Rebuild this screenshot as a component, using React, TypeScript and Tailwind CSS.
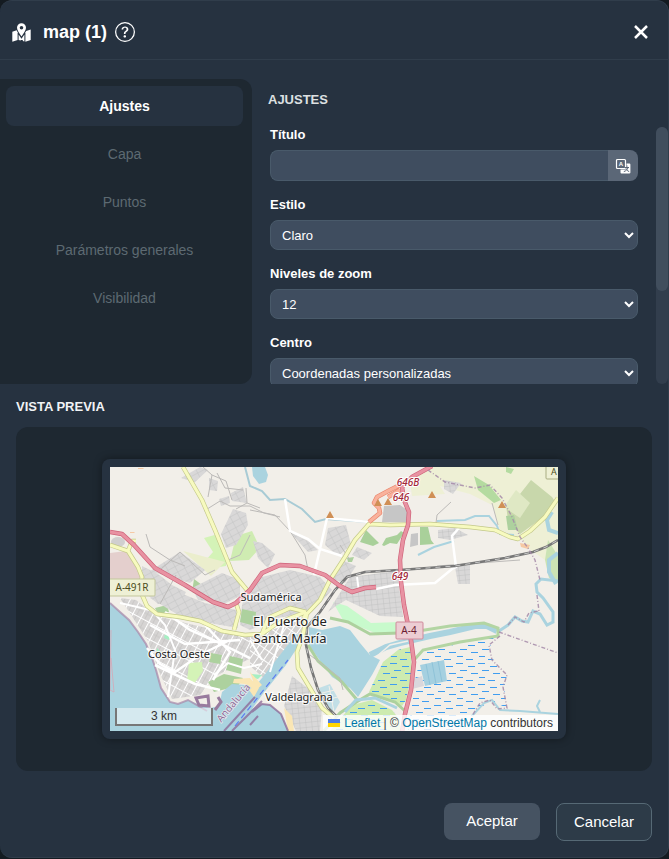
import { useState } from 'react'
import { BsQuestionCircle } from 'react-icons/bs'

const tabs = ['Ajustes', 'Capa', 'Puntos', 'Parámetros generales', 'Visibilidad']

function MapIcon() {
  return (
    <svg viewBox="0 0 19 19" className="w-[19px] h-[19px]" fill="#fff" aria-hidden="true">
      <path fillRule="evenodd" d="M9.500 0.200a4.500 4.500 0 0 1 4.500 4.500c0 2.600-2.600 5.600-4.500 8.800C7.600 10.300 5 7.300 5 4.700A4.500 4.500 0 0 1 9.500 0.200zM9.500 3a1.800 1.800 0 1 0 0 3.600 1.800 1.800 0 0 0 0-3.600z" />
      <path d="M0.300 8.800 4.600 7.300 5.600 9.300V17L0.300 18.700z" />
      <path d="M18.700 6.600V16.900L13.400 18.700V9.300L14.200 8z" />
      <path d="M6.600 11.500 9.500 15.800 12.400 11.500V18.600L10.800 18.100V16.900H8.800V17.500L6.600 16.900z" />
    </svg>
  )
}

function TranslateIcon() {
  return (
    <svg viewBox="0 0 16 16" className="w-4 h-4" aria-hidden="true">
      <rect x="1.500" y="1.500" width="9" height="9" rx="1" fill="none" stroke="#fff" strokeWidth="1.200" />
      <text x="6" y="8" fontSize="6" fontWeight="700" textAnchor="middle" fill="#fff" fontFamily="Liberation Sans, sans-serif">A</text>
      <path d="M11.500 5.500h3c.5 0 .9.4.9.9v8.200c0 .5-.4.9-.9.9H6.400c-.5 0-.9-.4-.9-.9V11.500h6z" fill="#fff" />
      <path d="M12 7.500v1.200M9.800 9.500h4.200M13 9.700c-.6 2-2 3.200-4.200 3.900M11.500 11.500c.6 1 1.500 1.800 2.700 2.100" stroke="#5b6777" strokeWidth="1" fill="none" />
    </svg>
  )
}

const ridge = 'M336 716 328 708 318 690 311 668 306 645 307 627 320 612 335 590 347 577 365 572 400 570 455 566 505 558 533 552 546 547 558 540'
const marshWest = 'M383 662 398 650 410 647 412 671 406 700 402 706 386 699 369 692z M352 705 372 700 392 710 400 720 400 731H330z'
const secondary = 'M183 467 202 500 215 530 226 557 232 572 247 590M303 618 320 600 330 580 345 557 355 540 369 524 390 525 430 524 470 527 495 530 510 537 518 539 530 531 545 517 558 498M110 545 128 551 132 541 136 541M128 551 138 567 142 577 140 590 147 606 157 614 180 617 200 621 222 631 245 635 262 634 275 625 290 618 306 612M307 612 303 635 297 652 298 668 310 688 322 708 334 718M234 630 239 612 236 603M262 634 268 618 290 608 306 612'
const coastRoad = 'M110 532 122 534 134 545 155 568 185 585 213 602 228 607 236 603 250 590 262 573 280 565 300 566 325 575 340 586 352 592 365 588 376 587'
const motorway = 'M432 466 412 477 402 487 404 500 409 512 408 525 403 540 400 560 401 582 404 605 411 640 414 662 411 690 405 714 402 732'
const branch = 'M369 522 380 513 379 508 374 503 377 497 390 490 410 480M388 497 400 490'

function MapCanvas() {
  return (
    <svg viewBox="110 467 448 264" className="block w-full h-auto" role="img" aria-label="El Puerto de Santa María">
      <defs>
        <pattern id="blocks" width="8" height="6" patternUnits="userSpaceOnUse" patternTransform="rotate(-28)">
          <rect width="8" height="6" fill="#d9d8d8" />
          <path d="M0 0H8M0 0V6" stroke="#c2c1c1" strokeWidth="0.900" />
        </pattern>
        <pattern id="streets" width="15" height="9" patternUnits="userSpaceOnUse" patternTransform="rotate(-62)">
          <rect width="15" height="9" fill="#d6d4d3" />
          <path d="M0 4.500H15M7 0V9" stroke="#c6c5c4" strokeWidth="0.800" />
          <path d="M0 0H15M0 0V9" stroke="#fff" strokeWidth="2" />
        </pattern>
        <pattern id="oldtown" width="10" height="6" patternUnits="userSpaceOnUse" patternTransform="rotate(-55)">
          <rect width="10" height="6" fill="#d3d1d0" />
          <path d="M0 0H10M0 0V6" stroke="#fff" strokeWidth="2" />
        </pattern>
        <pattern id="grid" width="6" height="5" patternUnits="userSpaceOnUse" patternTransform="rotate(-6)">
          <rect width="6" height="5" fill="#d9d8d8" />
          <path d="M0 0H6M0 0V5" stroke="#bdbcbc" strokeWidth="0.800" />
        </pattern>
        <pattern id="marsh" x="410" y="640" width="22" height="21" patternUnits="userSpaceOnUse">
          <path d="M2 2.500h7M14 5.500h7M6 9.500h7M17 12.500h5M0 12.500h2M3 16.500h6M12 19.500h7" stroke="#3f9df0" strokeWidth="1" />
        </pattern>
      </defs>

      <rect x="110" y="467" width="448" height="264" fill="#f2efe9" />

      {/* farmland, woods and parks */}
      <path d="M428 467H558V553L545 560 528 548 520 537 500 530 492 505 470 494 440 486 445 494 412 496 410 480z" fill="#eef0d5" />
      <path d="M531 480 552 497 556 503 545 516 520 534 508 520 506 505 520 494z" fill="#c8d7ab" />
      <path d="M516 490 530 503 520 518 504 507z" fill="#dfe8c4" />
      <path d="M474 476 489 485 501 500 494 503 478 490z M506 467 514 469 511 474 506 472z" fill="#b4dba0" />
      <path d="M506 516 514 515 518 530 508 530z" fill="#add19e" />
      <path d="M548 540 558 556 558 583 549 578 545 560z" fill="#cbe3b4" />
      <path d="M204 538 218 534 226 557 226 566 212 568 206 560 213 552z" fill="#d4f3b7" />
      <path d="M183 551 225 562 211 576z" fill="#ebeecd" />
      <path d="M236 536 252 531 260 548 249 560 230 561z" fill="#cfecb2" />
      <path d="M366 530 377 541 379 543 373 546 360 542z M386 538 397 535 401 531 404 533 397 544 390 543 384 546 382 545z M420 527 428 527 431 540 434 544 420 545z" fill="#a9d09a" />
      <path d="M333 602 347 606 371 623 400 622 404 632 375 633 343 620z" fill="#c8facc" />
      <path d="M155 608 167 605 169 612 158 614z M194 579 202 585 201 596 192 592z M182 601 197 604 195 609 182 607z M347 558 354 557 352 562 348 562z" fill="#add19e" />
      <path d="M110 553 126 551 141 575 140 590H110z" fill="#e4cfcd" />
      <ellipse cx="118" cy="542" rx="7" ry="5" fill="#d0cfcf" />
      <path d="M384 506 400 505 410 512 409 522 382 522z M411 534 418 533 418 545 410 547z" fill="#c6c6c6" />
      <path d="M138 468h6l-1 1h-5z M130 532h5l-1 1h-4z M520 543 530 545 528 549 521 547z" fill="#f6c9a4" />

      {/* built-up areas */}
      <path d="M181 478 200 467 208 470 195 482z M209 478 218 481 217 491 209 490z M231 493 243 487 247 503 232 501z M219 499 229 496 230 503 221 506z" fill="url(#blocks)" />
      <path d="M221 534 233 509 246 513 248 525 236 545 226 548z" fill="url(#blocks)" />
      <path d="M142 566 158 574 172 585 186 592 180 604 158 604 142 590z M150 571 180 552 205 570 190 583z" fill="url(#blocks)" />
      <path d="M192 588 222 573 240 580 240 596 224 604 198 600z" fill="url(#blocks)" />
      <path d="M253 541 262 543 275 554 268 568 258 558z M290 532 308 541 318 550 308 552z M328 528 346 525 351 545 338 556 325 545z M357 547 372 553 364 560 352 555z" fill="url(#blocks)" />
      <path d="M150 598 168 588 205 603 236 610 238 628 215 624 180 616z" fill="url(#blocks)" />
      <path d="M246 592 262 577 290 570 320 577 332 590 312 612 278 618 250 630 240 625 242 605z" fill="url(#blocks)" />
      <path d="M328 578 342 560 356 566 345 583z" fill="url(#blocks)" />
      <path d="M350 577 397 571 403 617 380 616 346 600 336 606 328 612z" fill="url(#grid)" />
      <path d="M455 567 470 565 470 584 458 584z M438 530 455 528 468 535 450 540 438 538z M444 480 461 483 453 494 444 489z" fill="url(#grid)" />
      <path d="M120 598 136 600 156 616 215 630 258 638 256 656 243 662 214 677 200 695 172 699 160 674 148 641z" fill="url(#streets)" />
      <path d="M250 637 283 620 307 613 298 640 266 680 250 666z" fill="url(#oldtown)" />
      <path d="M292 676 310 690 322 708 320 731H296L284 706z" fill="url(#grid)" />
      <path d="M310 650 333 673 345 690 338 694 318 678z" fill="#f2efe9" />
      <path d="M242 609 256 612 255 626 240 622z M211 653 222 655 220 664 209 662z M230 656 243 659 241 674 226 670z M208 682 224 674 243 678 238 686 214 692z" fill="#add19e" />
      <path d="M189 663 202 662 203 671 194 684 187 681z" fill="#d4f3b7" />
      <path d="M157 648 161 652 156 654z M165 634 171 636 169 640 164 638z M252 674 262 675 258 679 252 678z" fill="#a6efc3" />

      {/* sea, lagoon and rivers */}
      <path d="M110 603 120 612 129 620 138 632 146 644 152 658 156 670 161 688 170 702 178 704 188 700 200 705 210 708 219 706 222 692 232 684 246 685 252 690 262 678 280 655 296 634 304 637 286 665 262 695 252 709 262 704 270 705 281 714 288 731H110z" fill="#aad3df" />
      <path d="M110 603 120 612 129 620 138 632 146 644 152 658 156 670 161 688 170 702 178 704 188 700 207 711" fill="none" stroke="#a98bab" strokeWidth="2" opacity="0.750" />
      <path d="M234 679 250 678 259 688 254 697 245 684 233 683z M250 672 262 685 256 690z M284 708 292 716 294 731H288z" fill="#fae6b4" />
      <path d="M196 698 208 696 209 706 199 705z M218 697 221 702 215 710" fill="none" stroke="#997b9e" strokeWidth="3" />
      <path d="M224 731 255 697M232 731 262 701M250 725 258 716M252 712 262 704 270 705 281 714 288 731" fill="none" stroke="#8d6b98" strokeWidth="2" opacity="0.800" />
      <path d="M235 726 262 692 288 660" fill="none" stroke="#5c7cf2" strokeWidth="1.200" strokeDasharray="6 4" />
      <path d="M309 627 322 630 340 626 350 630 360 643 370 655 380 660 372 675 358 697 350 688 332 677 318 658 309 645z" fill="#aad3df" />
      <path d="M341 624 353 629 363 641 374 655" fill="none" stroke="#f2efe9" strokeWidth="2.500" />
      <path d="M370 655 386 647 400 643 430 636 450 632 475 626 487 626 497 631" fill="none" stroke="#aad3df" strokeWidth="6" />
      <path d="M376 657 390 645 408 641" fill="none" stroke="#f2efe9" strokeWidth="1.500" />
      <path d="M319 688 330 684 340 702 333 714 322 700z" fill="#c2dfe6" />
      <path d="M322 693 335 690M325 700 338 697M329 686 334 712" stroke="#f2efe9" strokeWidth="1" />
      <path d="M252 467H265L268 475 266 482 259 484 253 476z" fill="#aad3df" />
      <path d="M245 467 250 486 262 491 270 500 285 499 302 509 315 522 326 519 369 522" fill="none" stroke="#a8cbd5" strokeWidth="2" />
      <path d="M437 521 465 520 475 516 489 516 497 526 500 534 514 535M418 555 434 547 454 541" fill="none" stroke="#aad3df" strokeWidth="2" />
      <path d="M552 512 547 520 549 530 558 533M558 553 549 560 549 572 556 584" fill="none" stroke="#aad3df" strokeWidth="4" />
      <path d="M558 581 541 579 536 584 537 592 543 598 553 612 553 622 547 625 540 614 533 611 528 622 522 621 515 617 508 625 499 631" fill="none" stroke="#aad3df" strokeWidth="3" />

      {/* salt marshes */}
      <path d={marshWest} fill="#cdebb0" />
      <path d={marshWest} fill="url(#marsh)" />
      <path d="M422 652 494 637 489 649 494 661 507 675 504 688 507 708 490 700 476 712 465 731H408L415 680z" fill="url(#marsh)" />
      <path d="M420 665 444 660 447 681 425 686z" fill="#a5d0e0" />
      <path d="M426 664 430 685M432 662 436 684M438 661 442 682" stroke="#8fc3d8" strokeWidth="1" />
      <path d="M413 679 422 676 424 686 412 689z" fill="#d9d7dc" />
      <path d="M308 645 318 661 342 682 358 701 370 694 395 702 405 711M330 618 348 622 370 634 400 633M324 731 340 713 358 701" fill="none" stroke="#add19e" strokeWidth="3" />
      <path d="M412 632 450 626 484 623 498 628 498 636 460 642 423 650 415 659" fill="none" stroke="#b3d5a3" strokeWidth="3" />
      <path d="M345 712 356 700 375 698 397 708" fill="none" stroke="#aad3df" strokeWidth="3" />
      <path d="M472 716 484 703 492 700 500 710 520 711 558 714M540 700 537 706 540 712" fill="none" stroke="#aad3df" strokeWidth="2" />

      {/* tracks and minor roads */}
      <path d="M146 534 150 547 170 560 185 566M204 511 220 501 230 506 250 506M208 497 212 475 203 467M217 473 225 488 243 490M247 503 260 508M250 510 275 515 290 531 305 555 308 570M436 523 437 515 451 502M492 503 498 525M160 604 176 575M250 535 240 555 228 560M160 570 180 552 205 575 215 570M212 475 226 481 232 500M236 509 247 503 246 488M250 506 264 513 280 517M437 566 520 560M340 545 350 560M310 655 340 678 343 690" fill="none" stroke="#bcbab8" strokeWidth="1" />
      <path d="M285 499 290 531 308 539 320 549 342 556M320 549 327 518 369 522M320 549 314 575M376 589 395 585 435 583 452 569 456 567 452 536 459 528M165 612 190 630 215 641 250 658M147 648 160 664 175 672 200 655 230 640M155 665 195 684 220 690M205 625 230 652 213 680M150 625 185 644 240 640" fill="none" stroke="#fff" strokeWidth="2.500" />
      <path d="M147 605 165 625 175 650 168 697M120 603 150 610M250 640 262 660M285 622 270 672M297 620 262 632M357 577 359 592M214 675 228 663 244 668 262 664" fill="none" stroke="#fff" strokeWidth="2" />

      {/* railway */}
      <path d={ridge} fill="none" stroke="#777" strokeWidth="2.600" />
      <path d={ridge} fill="none" stroke="#ddd" strokeWidth="0.800" strokeDasharray="5 5" />

      {/* roads */}
      <g fill="none" strokeLinejoin="round">
        <path d={secondary} stroke="#c3c88a" strokeWidth="4.500" />
        <path d={secondary} stroke="#f7fabf" strokeWidth="3.200" />
        <path d={branch} stroke="#e8836a" strokeWidth="4.500" />
        <path d={branch} stroke="#f9b29c" strokeWidth="3.200" />
        <path d={coastRoad} stroke="#ce6279" strokeWidth="4.500" />
        <path d={motorway} stroke="#ce6279" strokeWidth="4.500" />
        <path d={coastRoad} stroke="#e892a2" strokeWidth="3.200" />
        <path d={motorway} stroke="#e892a2" strokeWidth="3.200" />
      </g>

      {/* municipal boundaries */}
      <path d="M428 470 445 482 475 488 490 485 502 498 512 517 520 537 528 548 535 560 540 580M537 595 539 611M499 632 558 653M500 636 489 645 492 660 507 675 503 687 507 708 497 709 490 700 480 703 472 716M508 625 515 617 524 622 529 613 538 611" fill="none" stroke="#a58aa8" strokeWidth="1.400" strokeDasharray="4 2 1 2" opacity="0.850" />
      <path d="M111 630 110 690 114 692 111 658" fill="none" stroke="#d8a6b4" strokeWidth="0.800" />

      <path d="M330 511l4 7h-8z M378 499l4 7h-8z M388 498l4 7h-8z M432 491l4 7h-8z M502 501l4 7h-8z" fill="#d08f55" />

      {/* road shields */}
      <rect x="108" y="579" width="47" height="17" rx="1" fill="#eef0d5" stroke="#c3c79b" />
      <rect x="396" y="622" width="27" height="17" rx="1" fill="#eccdd3" stroke="#d0899b" />
      <rect x="546" y="462" width="22" height="17" rx="1" fill="#eef0d5" stroke="#a9ad82" />

      <g fontFamily="Noto Sans, sans-serif" fontSize="10" textAnchor="middle">
        <text x="132" y="591" fill="#4a4c20">A-491R</text>
        <text x="409" y="634" fill="#6b1c31">A-4</text>
        <text x="554" y="475" fontSize="9" fill="#4a4c20">A</text>
        <g fill="#a32638" stroke="#fff" strokeWidth="2" paintOrder="stroke" fontStyle="italic" fontWeight="500">
          <text x="408" y="486">646B</text>
          <text x="401" y="501">646</text>
          <text x="400" y="580">649</text>
        </g>
        <text transform="translate(236 705) rotate(-50)" fill="#8d6b98" stroke="#e6e9ee" strokeWidth="1.500" paintOrder="stroke">Andalucía</text>
        <g fill="#222" stroke="#fff" strokeOpacity="0.750" strokeWidth="2.500" paintOrder="stroke">
          <text x="271" y="601" fontSize="11">Sudamérica</text>
          <text x="179" y="658" fontSize="11">Costa Oeste</text>
          <text x="299" y="701" fontSize="11">Valdelagrana</text>
          <text x="290" y="626" fontSize="13">El Puerto de</text>
          <text x="290" y="643" fontSize="13">Santa María</text>
        </g>
      </g>
    </svg>
  )
}

function SelectField({ id, label, options }: { id: string; label: string; options: string[] }) {
  return (
    <div>
      <label htmlFor={id} className="block mb-2 text-[13px] leading-[15px] font-bold text-white">{label}</label>
      <select id={id} className="block w-full h-[30px] px-[7px] rounded-lg border border-[#495a6a] bg-[#3f4d5f] text-[13px] text-white">
        {options.map((o) => <option key={o}>{o}</option>)}
      </select>
    </div>
  )
}

export default function App() {
  const [tab, setTab] = useState('Ajustes')
  const [title, setTitle] = useState('')

  return (
    <div className="min-h-screen bg-[#141b21] font-['Liberation_Sans',Arial,sans-serif]">
      <div className="rounded-xl border-t border-r border-b border-[#303d4b] bg-[#263240] text-white">
        <header className="flex items-center justify-between h-[59px] pl-3 pr-5 pt-1 border-b border-[#303d4b]">
          <div className="flex items-center gap-2">
            <MapIcon />
            <h1 className="pl-1 text-lg font-bold">map (1)</h1>
            <button type="button" aria-label="Ayuda"><BsQuestionCircle className="block w-5 h-5" /></button>
          </div>
          <button type="button" aria-label="Cerrar">
            <svg viewBox="0 0 14 14" className="block w-[14px] h-[14px]" stroke="#fff" strokeWidth="2.500">
              <path d="M1 1l12 12M13 1L1 13" />
            </svg>
          </button>
        </header>

        <div className="flex mt-[19px] h-[305px]">
          <nav className="w-[252px] shrink-0 pl-[6px] pr-[9px] pt-[7px] rounded-r-xl bg-[#1e2831] flex flex-col gap-2">
            {tabs.map((t) => (
              <button
                key={t}
                type="button"
                onClick={() => setTab(t)}
                className={t === tab
                  ? 'h-10 shrink-0 rounded-lg bg-[#263240] text-sm font-bold text-white'
                  : 'h-10 shrink-0 rounded-lg text-sm text-[#5d6a72]'}
              >
                {t}
              </button>
            ))}
          </nav>

          <section className="flex-1 min-w-0 flex flex-col pl-4">
            <h2 className="h-12 pt-3 text-[13px] leading-[17px] font-bold text-[#dde0e2]">AJUSTES</h2>
            <div className="flex flex-1 min-h-0">
              <form className="flex-1 min-w-0 flex flex-col gap-4 pl-[2px] pr-[18px] overflow-y-auto">
                <div>
                  <label htmlFor="titulo" className="block mb-2 text-[13px] leading-[15px] font-bold text-white">Título</label>
                  <div className="flex h-[31px]">
                    <input
                      id="titulo"
                      type="text"
                      value={title}
                      onChange={(e) => setTitle(e.target.value)}
                      className="flex-1 min-w-0 px-3 rounded-l-lg border border-r-0 border-[#495a6a] bg-[#3f4d5f] text-[13px]"
                    />
                    <button type="button" aria-label="Traducir" className="w-[30px] flex items-center justify-center rounded-r-lg bg-[#5b6777]">
                      <TranslateIcon />
                    </button>
                  </div>
                </div>
                <SelectField id="estilo" label="Estilo" options={['Claro', 'Oscuro']} />
                <SelectField id="zoom" label="Niveles de zoom" options={['12', '13', '14']} />
                <SelectField id="centro" label="Centro" options={['Coordenadas personalizadas', 'Automático']} />
              </form>
              <div className="w-3 rounded-full bg-[#323e4d]">
                <div className="h-[164px] rounded-full bg-[#414e5d]"></div>
              </div>
            </div>
          </section>
        </div>

        <section className="px-4 pt-[15px]">
          <h2 className="mb-3 text-[13px] leading-4 font-bold text-[#f1f3f5]">VISTA PREVIA</h2>
          <div className="flex justify-center p-8 rounded-xl bg-[#1e2831]">
            <div className="relative w-full max-w-[464px] p-2 rounded-lg bg-[#263240] shadow-[0_0_8px_rgba(0,0,0,0.4)]">
              <MapCanvas />
              <div className="absolute left-[13px] bottom-[13px] w-[98px] h-[18px] border-2 border-t-0 border-[#777] bg-white/50 text-center text-xs leading-4 text-[#333]">3 km</div>
              <div className="absolute right-2 bottom-2 flex items-center h-4 px-[5px] bg-white/80 text-xs text-[#333] whitespace-pre">
                <a href="#leaflet" className="flex items-center text-[#0078a8]">
                  <svg viewBox="0 0 12 8" className="w-3 h-2 mr-1" aria-hidden="true">
                    <path fill="#4c7be1" d="M0 0h12v4H0z" />
                    <path fill="#ffd500" d="M0 4h12v4H0z" />
                  </svg>
                  Leaflet
                </a>
                <span> | © </span>
                <a href="#osm" className="text-[#0078a8]">OpenStreetMap</a>
                <span> contributors</span>
              </div>
            </div>
          </div>
        </section>

        <footer className="flex justify-end gap-4 px-4 pt-8 pb-4">
          <button type="button" className="w-24 h-[37px] rounded-lg bg-[#465362] text-[15px]">Aceptar</button>
          <button type="button" className="w-24 h-[38px] rounded-lg border border-[#566975] bg-[#2d3b48] text-[15px]">Cancelar</button>
        </footer>
      </div>
    </div>
  )
}
